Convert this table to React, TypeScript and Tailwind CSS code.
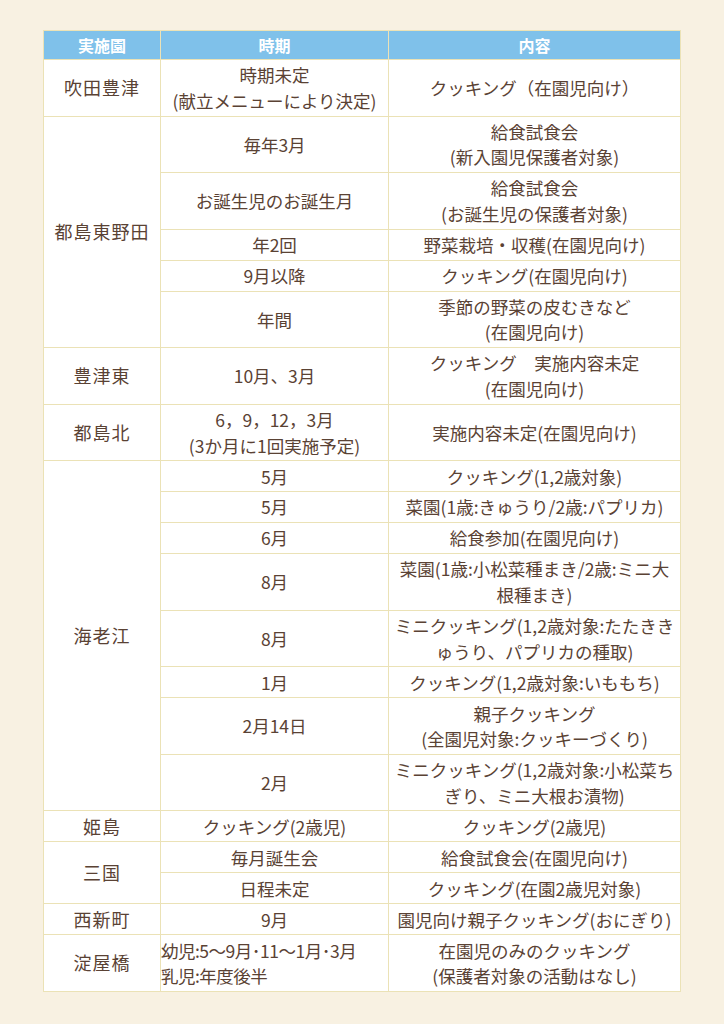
import { Fragment } from 'react';

type Group = {
  name: string;
  rows: { period: string; content: string; left?: boolean }[];
};

const groups: Group[] = [
  {
    name: '吹田豊津',
    rows: [{ period: '時期未定\n(献立メニューにより決定)', content: 'クッキング（在園児向け）' }],
  },
  {
    name: '都島東野田',
    rows: [
      { period: '毎年3月', content: '給食試食会\n(新入園児保護者対象)' },
      { period: 'お誕生児のお誕生月', content: '給食試食会\n(お誕生児の保護者対象)' },
      { period: '年2回', content: '野菜栽培・収穫(在園児向け)' },
      { period: '9月以降', content: 'クッキング(在園児向け)' },
      { period: '年間', content: '季節の野菜の皮むきなど\n(在園児向け)' },
    ],
  },
  {
    name: '豊津東',
    rows: [{ period: '10月、3月', content: 'クッキング　実施内容未定\n(在園児向け)' }],
  },
  {
    name: '都島北',
    rows: [{ period: '6，9，12，3月\n(3か月に1回実施予定)', content: '実施内容未定(在園児向け)' }],
  },
  {
    name: '海老江',
    rows: [
      { period: '5月', content: 'クッキング(1,2歳対象)' },
      { period: '5月', content: '菜園(1歳:きゅうり/2歳:パプリカ)' },
      { period: '6月', content: '給食参加(在園児向け)' },
      { period: '8月', content: '菜園(1歳:小松菜種まき/2歳:ミニ大\n根種まき)' },
      { period: '8月', content: 'ミニクッキング(1,2歳対象:たたきき\nゅうり、パプリカの種取)' },
      { period: '1月', content: 'クッキング(1,2歳対象:いももち)' },
      { period: '2月14日', content: '親子クッキング\n(全園児対象:クッキーづくり)' },
      { period: '2月', content: 'ミニクッキング(1,2歳対象:小松菜ち\nぎり、ミニ大根お漬物)' },
    ],
  },
  {
    name: '姫島',
    rows: [{ period: 'クッキング(2歳児)', content: 'クッキング(2歳児)' }],
  },
  {
    name: '三国',
    rows: [
      { period: '毎月誕生会', content: '給食試食会(在園児向け)' },
      { period: '日程未定', content: 'クッキング(在園2歳児対象)' },
    ],
  },
  {
    name: '西新町',
    rows: [{ period: '9月', content: '園児向け親子クッキング(おにぎり)' }],
  },
  {
    name: '淀屋橋',
    rows: [
      {
        period: '幼児:5〜9月･11〜1月･3月\n乳児:年度後半',
        content: '在園児のみのクッキング\n(保護者対象の活動はなし)',
        left: true,
      },
    ],
  },
];

const cell =
  'border border-[#ebe2b6] py-[2.2px] leading-[25.6px] whitespace-pre-line align-middle';

export default function App() {
  return (
    <div
      className="min-h-[1024px] w-full bg-[#f8f1e2] pt-[30px] pl-[43px] text-[#5a4234]"
      style={{ fontFamily: '"Noto Sans CJK JP", "Noto Sans", sans-serif' }}
    >
      <table className="w-[637px] table-fixed border-collapse bg-white text-[17.5px]">
        <colgroup>
          <col className="w-[117px]" />
          <col className="w-[228px]" />
          <col className="w-[292px]" />
        </colgroup>
        <thead>
          <tr className="h-[29px] bg-[#7fc1ea] text-[16px] font-medium text-white">
            <th className="border border-[#ebe2b6]">実施園</th>
            <th className="border border-[#ebe2b6]">時期</th>
            <th className="border border-[#ebe2b6]">内容</th>
          </tr>
        </thead>
        <tbody>
          {groups.map((g) => (
            <Fragment key={g.name}>
              {g.rows.map((r, i) => (
                <tr key={i}>
                  {i === 0 && (
                    <td
                      rowSpan={g.rows.length}
                      className={`${cell} text-center text-[18px] tracking-[1px]`}
                    >
                      {g.name}
                    </td>
                  )}
                  <td className={`${cell} ${r.left ? 'text-left tracking-[-0.5px]' : 'text-center'}`}>
                    {r.period}
                  </td>
                  <td className={`${cell} text-center`}>{r.content}</td>
                </tr>
              ))}
            </Fragment>
          ))}
        </tbody>
      </table>
    </div>
  );
}
